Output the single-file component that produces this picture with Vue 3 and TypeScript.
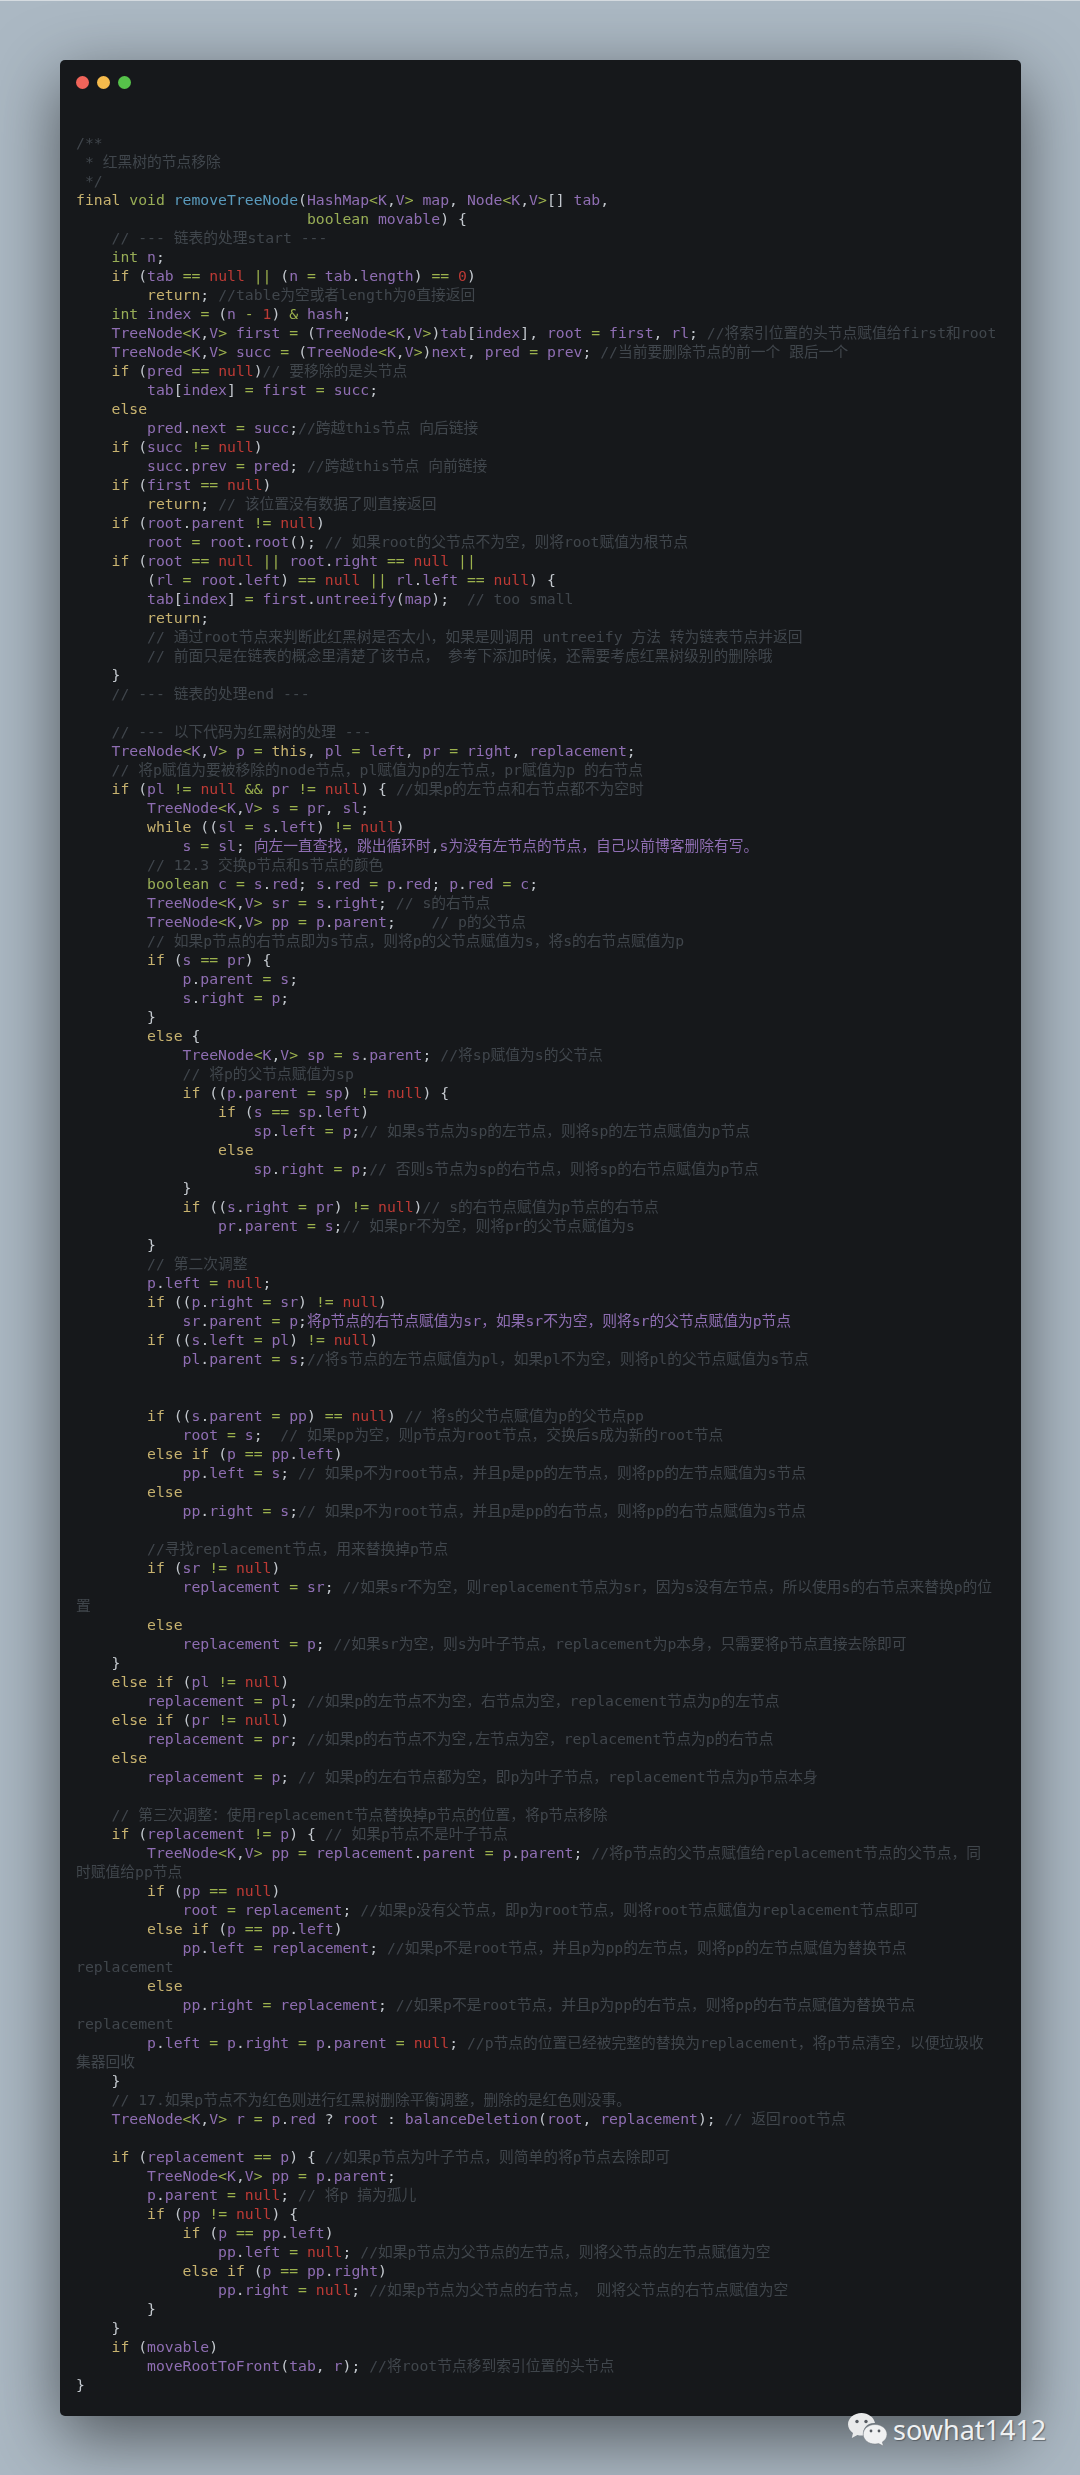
<script setup lang="ts">
interface Token { text: string; kind: string }

const source = `/**
 * 红黑树的节点移除
 */
final void removeTreeNode(HashMap<K,V> map, Node<K,V>[] tab,
                          boolean movable) {
    // --- 链表的处理start ---
    int n;
    if (tab == null || (n = tab.length) == 0)
        return; //table为空或者length为0直接返回
    int index = (n - 1) & hash;
    TreeNode<K,V> first = (TreeNode<K,V>)tab[index], root = first, rl; //将索引位置的头节点赋值给first和root
    TreeNode<K,V> succ = (TreeNode<K,V>)next, pred = prev; //当前要删除节点的前一个 跟后一个
    if (pred == null)// 要移除的是头节点
        tab[index] = first = succ;
    else
        pred.next = succ;//跨越this节点 向后链接
    if (succ != null)
        succ.prev = pred; //跨越this节点 向前链接
    if (first == null)
        return; // 该位置没有数据了则直接返回
    if (root.parent != null)
        root = root.root(); // 如果root的父节点不为空，则将root赋值为根节点
    if (root == null || root.right == null ||
        (rl = root.left) == null || rl.left == null) {
        tab[index] = first.untreeify(map);  // too small
        return;
        // 通过root节点来判断此红黑树是否太小，如果是则调用 untreeify 方法 转为链表节点并返回
        // 前面只是在链表的概念里清楚了该节点， 参考下添加时候，还需要考虑红黑树级别的删除哦
    }
    // --- 链表的处理end ---

    // --- 以下代码为红黑树的处理 ---
    TreeNode<K,V> p = this, pl = left, pr = right, replacement;
    // 将p赋值为要被移除的node节点，pl赋值为p的左节点，pr赋值为p 的右节点
    if (pl != null && pr != null) { //如果p的左节点和右节点都不为空时
        TreeNode<K,V> s = pr, sl;
        while ((sl = s.left) != null)
            s = sl; 向左一直查找，跳出循环时,s为没有左节点的节点，自己以前博客删除有写。
        // 12.3 交换p节点和s节点的颜色
        boolean c = s.red; s.red = p.red; p.red = c;
        TreeNode<K,V> sr = s.right; // s的右节点
        TreeNode<K,V> pp = p.parent;    // p的父节点
        // 如果p节点的右节点即为s节点，则将p的父节点赋值为s，将s的右节点赋值为p
        if (s == pr) {
            p.parent = s;
            s.right = p;
        }
        else {
            TreeNode<K,V> sp = s.parent; //将sp赋值为s的父节点
            // 将p的父节点赋值为sp
            if ((p.parent = sp) != null) {
                if (s == sp.left)
                    sp.left = p;// 如果s节点为sp的左节点，则将sp的左节点赋值为p节点
                else
                    sp.right = p;// 否则s节点为sp的右节点，则将sp的右节点赋值为p节点
            }
            if ((s.right = pr) != null)// s的右节点赋值为p节点的右节点
                pr.parent = s;// 如果pr不为空，则将pr的父节点赋值为s
        }
        // 第二次调整
        p.left = null;
        if ((p.right = sr) != null)
            sr.parent = p;将p节点的右节点赋值为sr，如果sr不为空，则将sr的父节点赋值为p节点
        if ((s.left = pl) != null)
            pl.parent = s;//将s节点的左节点赋值为pl，如果pl不为空，则将pl的父节点赋值为s节点


        if ((s.parent = pp) == null) // 将s的父节点赋值为p的父节点pp
            root = s;  // 如果pp为空，则p节点为root节点，交换后s成为新的root节点
        else if (p == pp.left)
            pp.left = s; // 如果p不为root节点，并且p是pp的左节点，则将pp的左节点赋值为s节点
        else
            pp.right = s;// 如果p不为root节点，并且p是pp的右节点，则将pp的右节点赋值为s节点

        //寻找replacement节点，用来替换掉p节点
        if (sr != null)
            replacement = sr; //如果sr不为空，则replacement节点为sr，因为s没有左节点，所以使用s的右节点来替换p的位置
        else
            replacement = p; //如果sr为空，则s为叶子节点，replacement为p本身，只需要将p节点直接去除即可
    }
    else if (pl != null)
        replacement = pl; //如果p的左节点不为空，右节点为空，replacement节点为p的左节点
    else if (pr != null)
        replacement = pr; //如果p的右节点不为空,左节点为空，replacement节点为p的右节点
    else
        replacement = p; // 如果p的左右节点都为空，即p为叶子节点，replacement节点为p节点本身

    // 第三次调整：使用replacement节点替换掉p节点的位置，将p节点移除
    if (replacement != p) { // 如果p节点不是叶子节点
        TreeNode<K,V> pp = replacement.parent = p.parent; //将p节点的父节点赋值给replacement节点的父节点，同¶时赋值给pp节点
        if (pp == null)
            root = replacement; //如果p没有父节点，即p为root节点，则将root节点赋值为replacement节点即可
        else if (p == pp.left)
            pp.left = replacement; //如果p不是root节点，并且p为pp的左节点，则将pp的左节点赋值为替换节点replacement
        else
            pp.right = replacement; //如果p不是root节点，并且p为pp的右节点，则将pp的右节点赋值为替换节点replacement
        p.left = p.right = p.parent = null; //p节点的位置已经被完整的替换为replacement，将p节点清空，以便垃圾收集器回收
    }
    // 17.如果p节点不为红色则进行红黑树删除平衡调整，删除的是红色则没事。
    TreeNode<K,V> r = p.red ? root : balanceDeletion(root, replacement); // 返回root节点

    if (replacement == p) { //如果p节点为叶子节点，则简单的将p节点去除即可
        TreeNode<K,V> pp = p.parent;
        p.parent = null; // 将p 搞为孤儿
        if (pp != null) {
            if (p == pp.left)
                pp.left = null; //如果p节点为父节点的左节点，则将父节点的左节点赋值为空
            else if (p == pp.right)
                pp.right = null; //如果p节点为父节点的右节点， 则将父节点的右节点赋值为空
        }
    }
    if (movable)
        moveRootToFront(tab, r); //将root节点移到索引位置的头节点
}`

const pattern =
  /(\/\/.*$|\/\*\*|^ \*\/|^ \*.*$)|\b(final|if|else|return|while|this)\b|\b(void|int|boolean)\b|\b(null|\d+(?!\.\d))\b|(==|!=|\|\||&&|[=<>&!-])|([(){}\[\],;.?:])|(\s+)/g

const kinds = ['', 'comment', 'keyword', 'type', 'literal', 'operator', 'punct', 'plain']

function tokenize(line: string): Token[] {
  const tokens: Token[] = []
  let last = 0
  for (const match of line.matchAll(pattern)) {
    const at = match.index ?? 0
    if (at > last) tokens.push({ text: line.slice(last, at), kind: 'ident' })
    const group = match.findIndex((value, i) => i > 0 && value !== undefined)
    tokens.push({ text: match[0].replace('¶', '\n'), kind: kinds[group] })
    last = at + match[0].length
  }
  if (last < line.length) tokens.push({ text: line.slice(last), kind: 'ident' })
  return tokens.map((t) =>
    t.text === 'removeTreeNode' ? { text: t.text, kind: 'fn' } : t,
  )
}

const lines = source.split('\n').map(tokenize)
</script>

<template>
  <main class="page">
    <section class="window">
      <header class="dots">
        <i class="dot red"></i>
        <i class="dot amber"></i>
        <i class="dot green"></i>
      </header>
      <pre class="code"><code><span v-for="(line, n) in lines" :key="n" class="line"><span v-for="(token, t) in line" :key="t" :class="token.kind">{{ token.text }}</span><br v-if="line.length === 0" /></span></code></pre>
    </section>
    <aside class="mark">
      <svg class="wechat" width="39" height="33" viewBox="0 0 39 33" aria-hidden="true">
        <path class="bubble-back" d="M13.5 0C6 0 0 5 0 11.3c0 3.6 2 6.8 5 8.8L3.8 25l5.6-3c1.3.4 2.7.6 4.1.6.6 0 1.200 0 1.800-.1C14 16 19 9.500 27 10c-1-5.600-6.800-10-13.500-10z" />
        <path class="bubble-front" d="M27 11.500c-6.400 0-11.800 4.300-11.800 9.800s5.400 9.800 11.800 9.800c1.300 0 2.500-.2 3.700-.5l4.700 2.400-1.100-3.900c3-1.800 4.700-4.600 4.700-7.800 0-5.500-5.600-9.800-12-9.800z" />
        <circle class="eye" cx="9" cy="8.500" r="1.700" />
        <circle class="eye" cx="18" cy="8.500" r="1.700" />
        <circle class="eye" cx="23" cy="18" r="1.400" />
        <circle class="eye" cx="31" cy="18" r="1.400" />
      </svg>
      <span class="handle">sowhat1412</span>
    </aside>
  </main>
</template>

<style scoped>
.page {
  position: relative;
  box-sizing: border-box;
  width: 1080px;
  height: 2475px;
  padding: 59px 59px 59px 60px;
  background: #abb8c3;
  border-top: 1px solid #d5dbe0;
}
.window {
  box-sizing: border-box;
  height: 2356px;
  background: #16181b;
  border-radius: 5px;
  box-shadow: 0 20px 68px rgba(0, 0, 0, 0.55);
  padding: 16px 23px 0 16px;
}
.dots {
  display: flex;
  gap: 8px;
  height: 13px;
}
.dot {
  width: 13px;
  height: 13px;
  border-radius: 50%;
}
.red { background: #f0645a; }
.amber { background: #f6bb4c; }
.green { background: #56c24a; }
.code {
  margin: 44px 0 0;
  white-space: pre-wrap;
  font-family: "DejaVu Sans Mono", "Noto Sans CJK SC", monospace;
  font-size: 14.76px;
  line-height: 19px;
  color: #c9ced4;
  filter: blur(0.4px);
}
.code code { font: inherit; }
.line { display: block; min-height: 19px; }
.comment { color: #40464c; }
.keyword { color: #c7b26f; }
.type { color: #98ad56; }
.literal { color: #bd3a35; }
.operator { color: #9cb14d; }
.punct { color: #c3c8ce; }
.ident { color: #8f6eb3; }
.fn { color: #5a9bbd; }
.mark {
  position: absolute;
  left: 848px;
  top: 2410px;
  display: flex;
  align-items: center;
  gap: 6px;
}
.bubble-back { fill: #e9eaeb; }
.bubble-front { fill: #f0f1f2; stroke: #777d83; stroke-width: 0.5; }
.eye { fill: #555a60; }
.handle {
  font-family: "Noto Sans", sans-serif;
  font-size: 27px;
  color: #eef0f2;
  text-shadow: 1px 1px 1px rgba(60, 65, 70, 0.6);
}
</style>
